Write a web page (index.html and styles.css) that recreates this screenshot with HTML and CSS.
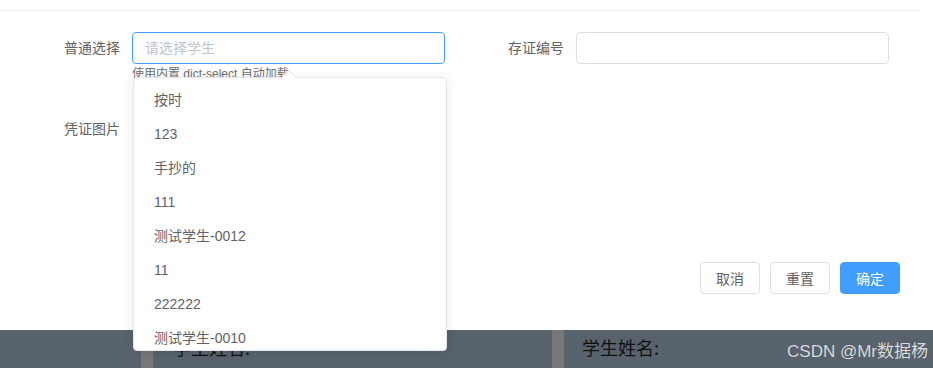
FILE: index.html
```html
<!DOCTYPE html>
<html lang="zh">
<head>
<meta charset="utf-8">
<title>表单</title>
<link rel="stylesheet" href="styles.css">
</head>
<body>
<div class="page">
  <div class="dialog">
    <div class="dialog-body">
      <div class="form-row row-first">
        <div class="form-item">
          <label class="form-label">普通选择</label>
          <div class="form-content">
            <div class="input focus"><span class="placeholder">请选择学生</span></div>
            <div class="hint">使用内置 dict-select 自动加载</div>
          </div>
        </div>
        <div class="form-item">
          <label class="form-label">存证编号</label>
          <div class="form-content">
            <div class="input"></div>
          </div>
        </div>
      </div>
      <div class="form-row row-second">
        <div class="form-item">
          <label class="form-label">凭证图片</label>
          <div class="form-content"></div>
        </div>
      </div>
    </div>
    <div class="dialog-footer">
      <button class="btn">取消</button>
      <button class="btn">重置</button>
      <button class="btn btn-primary">确定</button>
    </div>
  </div>
  <div class="strip">
    <div class="panel panel-left"><span class="panel-text">学生姓名:</span></div>
    <div class="panel panel-right"><span class="panel-text">学生姓名:</span></div>
  </div>

  <div class="dropdown">
    <span class="arrow"></span>
    <ul class="options">
      <li>按时</li>
      <li>123</li>
      <li>手抄的</li>
      <li>111</li>
      <li>测试学生-0012</li>
      <li>11</li>
      <li>222222</li>
      <li>测试学生-0010</li>
    </ul>
  </div>
  <div class="watermark">CSDN @Mr数据杨</div>
</div>
</body>
</html>
```
FILE: styles.css
```css
* { box-sizing: border-box; }
html, body { margin: 0; padding: 0; background: #fff; }
body {
  font-family: "Liberation Sans", "Noto Sans CJK SC", sans-serif;
  font-size: 14px;
  color: #606266;
  width: 933px;
  height: 368px;
  overflow: hidden;
}
.page { position: relative; width: 933px; height: 368px; }

.dialog {
  width: 920px;
  height: 330px;
  padding-top: 10px;
  display: flex;
  flex-direction: column;
}
.dialog-body {
  border-top: 1px solid #ebeef5;
  padding-top: 21px;
  flex: 1;
}
.form-row { display: flex; }
.row-first { height: 81px; }
.form-item { width: 444px; flex: none; display: flex; }
.form-label {
  width: 132px;
  padding-right: 12px;
  text-align: right;
  line-height: 32px;
  height: 32px;
  font-size: 14px;
  color: #606266;
  flex: none;
}
.form-content { width: 313px; flex: none; }
.input {
  height: 32px;
  border: 1px solid #dcdfe6;
  border-radius: 4px;
  padding: 0 12px;
  line-height: 30px;
  background: #fff;
}
.input.focus { border-color: #409eff; }
.placeholder { color: #c0c4cc; font-size: 14px; }
.hint {
  margin-top: 2px;
  font-size: 12px;
  line-height: 16px;
  color: #6b6e73;
  white-space: nowrap;
}

.dialog-footer {
  display: flex;
  justify-content: flex-end;
  gap: 10px;
  padding: 0 20px 36px 0;
}
.btn {
  width: 60px;
  height: 32px;
  border: 1px solid #dcdfe6;
  border-radius: 4px;
  background: #fff;
  color: #606266;
  font-family: "Liberation Sans", "Noto Sans CJK SC", sans-serif;
  font-size: 14px;
  padding: 0;
}
.btn-primary {
  background: #409eff;
  border-color: #409eff;
  color: #fff;
}

.strip {
  height: 38px;
  background: #59636d;
  display: flex;
  padding-left: 141px;
}
.panel {
  border-left: 12px solid #787878;
  padding-left: 20px;
  height: 38px;
  display: flex;
  align-items: center;
}
.panel-left { width: 411px; }
.panel-right { padding-left: 18px; }
.panel-text {
  font-family: "Noto Sans CJK SC", sans-serif;
  font-size: 18px;
  color: #111;
  padding-bottom: 4px;
}

.dropdown {
  position: absolute;
  left: 133px;
  top: 77px;
  width: 314px;
  height: 274px;
  background: #fff;
  border: 1px solid #e4e7ed;
  border-radius: 4px;
  box-shadow: 0 2px 12px 0 rgba(0, 0, 0, 0.1);
}
.arrow {
  position: absolute;
  left: 150px;
  top: -6px;
  width: 10px;
  height: 10px;
  background: #fff;
  border-top: 1px solid #e4e7ed;
  border-left: 1px solid #e4e7ed;
  transform: rotate(45deg);
}
.options {
  list-style: none;
  margin: 0;
  padding: 5px 0 0;
  height: 272px;
  overflow: hidden;
  position: relative;
  border-radius: 4px;
}
.options li {
  height: 34px;
  line-height: 34px;
  padding-left: 20px;
  font-size: 14px;
  color: #606266;
}

.watermark {
  position: absolute;
  right: 5px;
  bottom: 6px;
  font-family: "Liberation Sans", "Noto Sans CJK SC", sans-serif;
  font-size: 17px;
  color: rgba(255, 255, 255, 0.82);
  text-shadow: 0 0 1px rgba(0, 0, 0, 0.3);
}
```
